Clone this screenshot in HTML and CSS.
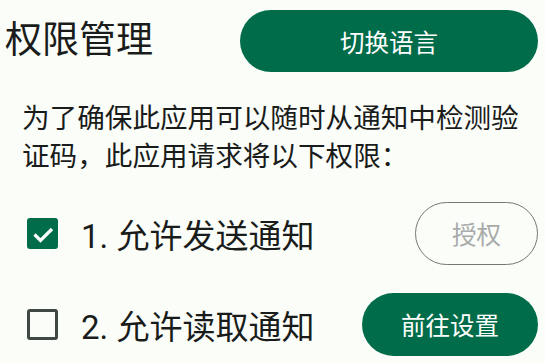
FILE: index.html
```html
<!DOCTYPE html>
<html lang="zh-CN">
<head>
<meta charset="utf-8">
<title>权限管理</title>
<link rel="stylesheet" href="styles.css">
</head>
<body>
<div class="page">
  <header class="header">
    <h1 class="title">权限管理</h1>
    <button class="btn btn-filled btn-lang">切换语言</button>
  </header>
  <p class="desc">为了确保此应用可以随时从通知中检测验证码，此应用请求将以下权限：</p>
  <div class="perm perm-first">
    <span class="check checked">
      <svg viewBox="0 0 30 30" width="30" height="30"><path d="M6.5 15.5 L12.5 21.5 L24 10" fill="none" stroke="#fff" stroke-width="3.2"/></svg>
    </span>
    <span class="label">1. 允许发送通知</span>
    <button class="btn btn-outline btn-grant" disabled>授权</button>
  </div>
  <div class="perm perm-second">
    <span class="check"></span>
    <span class="label">2. 允许读取通知</span>
    <button class="btn btn-filled btn-settings">前往设置</button>
  </div>
</div>
</body>
</html>
```
FILE: styles.css
```css
html, body {
  margin: 0;
  padding: 0;
  background: #fbfdf9;
}
body {
  font-family: Roboto, "Noto Sans CJK SC", sans-serif;
  color: #191c1a;
}
.page {
  width: 545px;
  height: 363px;
  overflow: hidden;
}
.header {
  display: flex;
  align-items: center;
  justify-content: space-between;
  padding: 10px 7px 0 5px;
}
.title {
  margin: 0;
  font-size: 37px;
  font-weight: 400;
  line-height: 62px;
}
.btn {
  font-family: Roboto, "Noto Sans CJK SC", sans-serif;
  font-size: 24.5px;
  height: 63px;
  border-radius: 32px;
  padding: 0;
  cursor: pointer;
}
.btn-filled {
  background: #006c4a;
  color: #ffffff;
  border: none;
}
.btn-lang {
  width: 298px;
  height: 62px;
  border-radius: 31px;
}
.desc {
  margin: 28px 22px 0 22px;
  font-size: 27.6px;
  line-height: 38px;
}
.perm {
  display: flex;
  align-items: center;
  padding: 0 7px 0 27px;
}
.perm-first {
  margin-top: 26px;
}
.perm-second {
  margin-top: 28px;
}
.check {
  width: 31px;
  height: 31px;
  box-sizing: border-box;
  border: 3px solid #3f4843;
  border-radius: 3px;
  display: flex;
  align-items: center;
  justify-content: center;
  flex: none;
}
.check.checked {
  background: #006c4a;
  border: none;
}
.check svg {
  display: block;
}
.label {
  margin-left: 23px;
  font-size: 33px;
  flex: 1;
}
.btn-outline {
  background: transparent;
  border: 1.5px solid #727973;
  color: #a8aba9;
}
.btn-grant {
  width: 123px;
}
.btn-settings {
  width: 176px;
}
```
